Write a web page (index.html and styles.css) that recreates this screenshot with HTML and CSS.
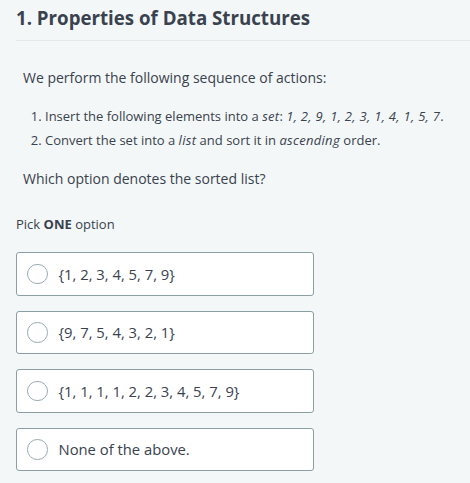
FILE: index.html
```html
<!DOCTYPE html>
<html lang="en">
<head>
  <meta charset="UTF-8" />
  <title>Properties of Data Structures</title>
  <link rel="stylesheet" href="styles.css">
</head>
<body>
  <div id="questao">
    <h1 class="titulo">1. Properties of Data Structures</h1>

    <div class="enunciado">
      <p>We perform the following sequence of actions:</p>
      <ol class="passos">
        <li>Insert the following elements into a <em>set</em>: <em>1, 2, 9, 1, 2, 3, 1, 4, 1, 5, 7</em>.</li>
        <li>Convert the set into a <em>list</em> and sort it in <em>ascending</em> order.</li>
      </ol>
      <p>Which option denotes the sorted list?</p>
    </div>

    <div class="instrucao">Pick <strong>ONE</strong> option</div>

    <div id="opcoes">
      <label class="opcao"><span class="radio"></span>{1, 2, 3, 4, 5, 7, 9}</label>
      <label class="opcao"><span class="radio"></span>{9, 7, 5, 4, 3, 2, 1}</label>
      <label class="opcao"><span class="radio"></span>{1, 1, 1, 1, 2, 2, 3, 4, 5, 7, 9}</label>
      <label class="opcao"><span class="radio"></span>None of the above.</label>
    </div>
  </div>
</body>
</html>
```

FILE: styles.css
```css
body {
  margin: 0;
  background-color: #f3f7f7;
  color: #39424e;
  font-family: "Open Sans", "Noto Sans", sans-serif;
}

#questao {
  padding: 0 0 0 16px;
}

.titulo {
  margin: 0;
  padding: 4px 0 8px 0;
  font-size: 18.7px;
  font-weight: 700;
  line-height: 28px;
  border-bottom: 1px solid #e3e8ea;
}

.enunciado {
  padding: 27px 0 0 7px;
  font-size: 14px;
  line-height: 20px;
}

.enunciado p {
  margin: 0;
}

.passos {
  margin: 16px 0 17px 0;
  padding: 0 0 0 22px;
  font-size: 13px;
  line-height: 24px;
}

.passos em {
  letter-spacing: 0.3px;
}

.instrucao {
  margin-top: 25px;
  font-size: 13px;
  line-height: 20px;
}

#opcoes {
  margin-top: 18px;
  width: 298px;
  display: flex;
  flex-direction: column;
  gap: 15px;
}

.opcao {
  display: flex;
  align-items: center;
  gap: 11px;
  height: 41.5px;
  padding: 0 10px;
  background: #fff;
  border: 1px solid #8a9ea4;
  border-radius: 3px;
  font-size: 14.8px;
  cursor: pointer;
}

.radio {
  width: 18.5px;
  height: 18.5px;
  border: 1px solid #9aabb0;
  border-radius: 50%;
  flex-shrink: 0;
}
```
